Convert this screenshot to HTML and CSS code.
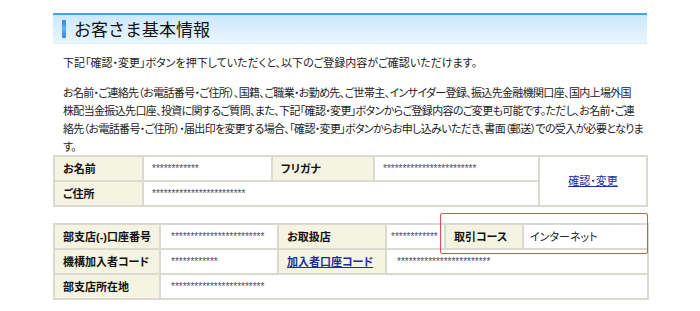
FILE: index.html
```html
<!DOCTYPE html>
<html lang="ja">
<head>
<meta charset="utf-8">
<title>お客さま基本情報</title>
<link rel="stylesheet" href="styles.css">
</head>
<body>
<div class="page">
  <h2 class="section-title"><span class="accent"></span><span class="title-text">お客さま基本情報</span></h2>
  <p class="lead">下記「確認・変更」ボタンを押下していただくと、以下のご登録内容がご確認いただけます。</p>
  <p class="note">お名前・ご連絡先（お電話番号・ご住所）、国籍、ご職業・お勤め先、ご世帯主、インサイダー登録、振込先金融機関口座、国内上場外国<br>株配当金振込先口座、投資に関するご質問、また、下記「確認・変更」ボタンからご登録内容のご変更も可能です。ただし、お名前・ご連<br>絡先（お電話番号・ご住所）・届出印を変更する場合、「確認・変更」ボタンからお申し込みいただき、書面（郵送）での受入が必要となりま<br>す。</p>

  <table class="info info-1">
    <colgroup>
      <col class="c89"><col class="c129"><col class="c102"><col class="c165"><col class="c108">
    </colgroup>
    <tr>
      <th>お名前</th>
      <td><span class="mask">************</span></td>
      <th>フリガナ</th>
      <td><span class="mask">************************</span></td>
      <td rowspan="2" class="action"><a href="#" class="link">確認・変更</a></td>
    </tr>
    <tr>
      <th>ご住所</th>
      <td colspan="3"><span class="mask">************************</span></td>
    </tr>
  </table>

  <div class="table-wrap">
    <table class="info info-2">
      <colgroup>
        <col class="c106"><col class="c118"><col class="c108"><col class="c59"><col class="c78"><col class="c125">
      </colgroup>
      <tr>
        <th>部支店(-)口座番号</th>
        <td class="wide-pad"><span class="mask">************************</span></td>
        <th>お取扱店</th>
        <td class="narrow"><span class="mask">************</span></td>
        <th>取引コース</th>
        <td class="plain">インターネット</td>
      </tr>
      <tr>
        <th>機構加入者コード</th>
        <td class="wide-pad"><span class="mask">************</span></td>
        <th><a href="#" class="link strong">加入者口座コード</a></th>
        <td colspan="3" class="wide-pad"><span class="mask">************************</span></td>
      </tr>
      <tr>
        <th>部支店所在地</th>
        <td colspan="5" class="wide-pad"><span class="mask">************************</span></td>
      </tr>
    </table>
    <div class="highlight"></div>
  </div>
</div>
</body>
</html>
```

FILE: styles.css
```css
html, body {
  margin: 0;
  padding: 0;
  background: #ffffff;
}

body {
  font-family: "Liberation Sans", "Noto Sans CJK JP", sans-serif;
  color: #222222;
  font-size: 11px;
}

.page {
  width: 594px;
  margin: 13px auto 0;
}

.section-title {
  display: flex;
  align-items: center;
  gap: 8px;
  box-sizing: border-box;
  height: 31px;
  margin: 0;
  padding: 0 0 0 9px;
  border-top: 2px solid #4aa2e6;
  border-bottom: 1px solid #d8eefb;
  background: linear-gradient(#cbe8fb, #eaf6fe);
  font-family: "Noto Sans CJK JP", sans-serif;
  font-size: 17px;
  font-weight: normal;
  color: #111111;
  line-height: 1;
}

.accent {
  display: block;
  width: 4px;
  height: 18px;
  border-radius: 1px;
  background: linear-gradient(#2f88d8, #5fb0ee 50%, #2f88d8);
}

.title-text {
  position: relative;
  top: -1px;
}

.lead,
.note {
  margin: 0;
  padding: 0 10px;
  font-family: "Noto Sans CJK JP", sans-serif;
  font-size: 11px;
  line-height: 18px;
  font-feature-settings: "palt";
  color: #222222;
}

.lead {
  margin-top: 9px;
}

.note {
  margin-top: 12px;
  padding-right: 0;
  letter-spacing: -0.66px;
  white-space: nowrap;
}

.info {
  width: 594px;
  table-layout: fixed;
  border-collapse: collapse;
  border: 2px solid #dcdad0;
}

.table-wrap {
  position: relative;
  margin-top: 16px;
}

.info th,
.info td {
  height: 23px;
  padding: 0 8px;
  border: 2px solid #dcdad0;
  vertical-align: middle;
  white-space: nowrap;
  overflow: hidden;
  text-align: left;
  font-family: "Liberation Sans", "Noto Sans CJK JP", sans-serif;
  font-size: 11px;
  line-height: 14px;
  font-feature-settings: "palt";
}

.info th {
  background: #f5f3e2;
  font-weight: bold;
  color: #111111;
}

.info td {
  background: #ffffff;
}

.info td.wide-pad {
  padding-left: 10px;
}

.info td.narrow {
  padding: 0 4px;
}

.info td.plain {
  padding-left: 6px;
  font-size: 11px;
  color: #222222;
}

.info td.action {
  text-align: center;
}

.mask {
  font-family: "Liberation Sans", sans-serif;
  font-size: 10px;
  color: #4b4d6a;
  letter-spacing: 0;
}

.link {
  color: #1b2f99;
  text-decoration: underline;
}

.link.strong {
  font-weight: bold;
}

.c89 { width: 89px; }
.c129 { width: 129px; }
.c102 { width: 102px; }
.c165 { width: 165px; }
.c108 { width: 108px; }
.c106 { width: 106px; }
.c118 { width: 118px; }
.c59 { width: 59px; }
.c78 { width: 78px; }
.c125 { width: 125px; }

.highlight {
  position: absolute;
  top: -10px;
  right: -1px;
  width: 208px;
  height: 41px;
  box-sizing: border-box;
  border: 1px solid #f04848;
  border-radius: 2px;
  pointer-events: none;
}
```
